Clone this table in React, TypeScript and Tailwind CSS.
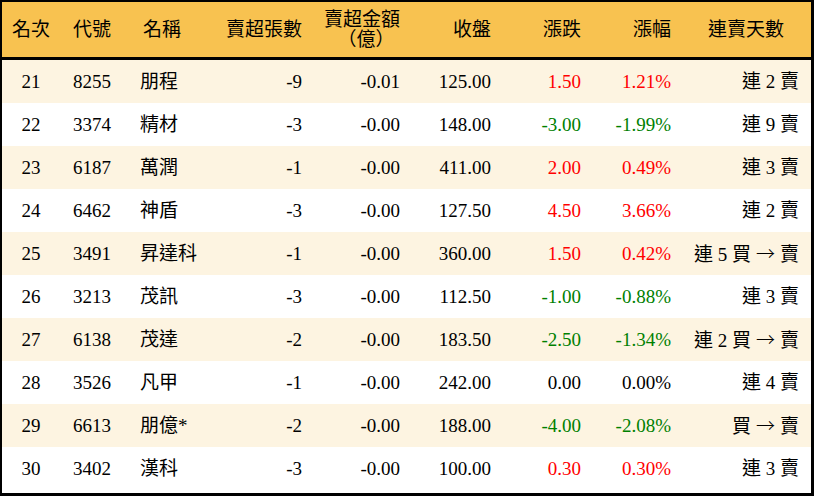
import React from 'react';

type Row = {
  rank: number;
  code: string;
  name: string;
  lots: string;
  amount: string;
  close: string;
  change: string;
  pct: string;
  streak: string;
};

const rows: Row[] = [
  { rank: 21, code: '8255', name: '朋程', lots: '-9', amount: '-0.01', close: '125.00', change: '1.50', pct: '1.21%', streak: '連 2 賣' },
  { rank: 22, code: '3374', name: '精材', lots: '-3', amount: '-0.00', close: '148.00', change: '-3.00', pct: '-1.99%', streak: '連 9 賣' },
  { rank: 23, code: '6187', name: '萬潤', lots: '-1', amount: '-0.00', close: '411.00', change: '2.00', pct: '0.49%', streak: '連 3 賣' },
  { rank: 24, code: '6462', name: '神盾', lots: '-3', amount: '-0.00', close: '127.50', change: '4.50', pct: '3.66%', streak: '連 2 賣' },
  { rank: 25, code: '3491', name: '昇達科', lots: '-1', amount: '-0.00', close: '360.00', change: '1.50', pct: '0.42%', streak: '連 5 買 → 賣' },
  { rank: 26, code: '3213', name: '茂訊', lots: '-3', amount: '-0.00', close: '112.50', change: '-1.00', pct: '-0.88%', streak: '連 3 賣' },
  { rank: 27, code: '6138', name: '茂達', lots: '-2', amount: '-0.00', close: '183.50', change: '-2.50', pct: '-1.34%', streak: '連 2 買 → 賣' },
  { rank: 28, code: '3526', name: '凡甲', lots: '-1', amount: '-0.00', close: '242.00', change: '0.00', pct: '0.00%', streak: '連 4 賣' },
  { rank: 29, code: '6613', name: '朋億*', lots: '-2', amount: '-0.00', close: '188.00', change: '-4.00', pct: '-2.08%', streak: '買 → 賣' },
  { rank: 30, code: '3402', name: '漢科', lots: '-3', amount: '-0.00', close: '100.00', change: '0.30', pct: '0.30%', streak: '連 3 賣' },
];

const tone = (v: string) =>
  v.startsWith('-') ? 'text-[#008000]' : v.startsWith('0.00') ? 'text-black' : 'text-[#ff0000]';

const cols = 'grid grid-cols-[58px_70px_70px_112px_99px_90px_90px_90px_1fr]';

// the arrow is full width in the reference, so take it from the CJK face
const Streak = ({ text }: { text: string }) => {
  const parts = text.split(' → ');
  return (
    <>
      {parts.map((p, i) => (
        <React.Fragment key={i}>
          {i > 0 && (
            <span className="mx-[5px] font-light" style={{ fontFamily: '"Noto Sans CJK TC", sans-serif' }}>
              →
            </span>
          )}
          {p}
        </React.Fragment>
      ))}
    </>
  );
};

export default function App() {
  return (
    <div
      className="w-[814px] h-[496px] bg-white text-black border-t-2 border-l-2 border-r-[3px] border-b-[3px] border-black text-[19px] leading-none"
      style={{ fontFamily: '"Liberation Serif", "Noto Sans CJK TC", serif' }}
    >
      {/* header */}
      <div className={`${cols} h-[58px] bg-[#f8c250] border-b-[3px] border-black items-center`}>
        <div className="text-center">名次</div>
        <div className="pl-[13px]">代號</div>
        <div className="pl-[13px]">名稱</div>
        <div className="text-right pr-[10px]">賣超張數</div>
        <div className="flex justify-end pr-[11px]">
          <div className="text-center leading-[20px]">
            <div>賣超金額</div>
            <div className="flex justify-center pl-[8px]">
              <span className="inline-block w-[19px] text-center">（</span>
              <span>億</span>
              <span className="inline-block w-[19px] text-center">）</span>
            </div>
          </div>
        </div>
        <div className="text-right pr-[10px]">收盤</div>
        <div className="text-right pr-[10px]">漲跌</div>
        <div className="text-right pr-[10px]">漲幅</div>
        <div className="text-center">連賣天數</div>
      </div>

      {/* body */}
      {rows.map((r, i) => (
        <div
          key={r.rank}
          className={`${cols} h-[43px] items-center ${i % 2 === 0 ? 'bg-[#fdf4e1]' : 'bg-white'}`}
        >
          <div className="text-center">{r.rank}</div>
          <div className="pl-[13px]">{r.code}</div>
          <div className="pl-[10px]">{r.name}</div>
          <div className="text-right pr-[10px]">{r.lots}</div>
          <div className="text-right pr-[11px]">{r.amount}</div>
          <div className="text-right pr-[10px]">{r.close}</div>
          <div className={`text-right pr-[10px] ${tone(r.change)}`}>{r.change}</div>
          <div className={`text-right pr-[10px] ${tone(r.pct)}`}>{r.pct}</div>
          <div className="text-right pr-[12px] whitespace-pre">
            <Streak text={r.streak} />
          </div>
        </div>
      ))}
    </div>
  );
}
